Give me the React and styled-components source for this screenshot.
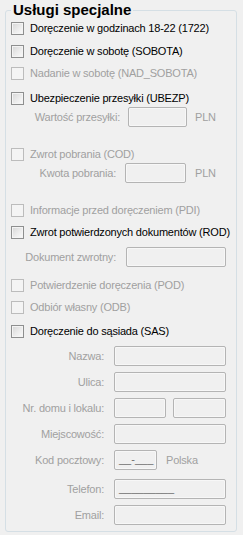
import React from 'react';
import styled, { createGlobalStyle } from 'styled-components';

const GlobalStyle = createGlobalStyle`
  html, body {
    margin: 0;
    padding: 0;
    background: #f0f0f0;
  }
  body {
    font-family: "Liberation Sans", Arial, sans-serif;
    font-size: 11px;
    letter-spacing: -0.2px;
  }
`;

const Page = styled.div`
  width: 243px;
  height: 535px;
  box-sizing: border-box;
  padding: 2px 5px 0 5px;
`;

const Group = styled.fieldset`
  margin: 0;
  padding: 0 0 6px 5px;
  width: 232px;
  box-sizing: border-box;
  border: 1px solid #d5dfe5;
  border-radius: 3px;
  min-inline-size: 0;
`;

const Title = styled.legend`
  padding: 0 2px;
  font-size: 15px;
  line-height: 16px;
  font-weight: bold;
  letter-spacing: 0;
  color: #000;
`;

const Row = styled.div`
  display: flex;
  align-items: center;
  height: 20px;
  margin-top: ${(p) => p.$top || 0}px;
  color: ${(p) => (p.$disabled ? '#a0a0a0' : '#000')};
  white-space: nowrap;
`;

const Box = styled.span`
  width: 13px;
  height: 13px;
  box-sizing: border-box;
  flex: none;
  border: 1px solid ${(p) => (p.$disabled ? '#bcbcbc' : '#8e8f8f')};
  background: ${(p) =>
    p.$disabled
      ? '#f4f4f4'
      : 'linear-gradient(135deg, #d6d6d6 0%, #ececec 55%, #fbfbfb 100%)'};
  box-shadow: inset 0 0 0 1px #f4f4f4;
`;

const CheckText = styled.span`
  margin-left: 6px;
`;

const Label = styled.span`
  width: ${(p) => p.$w}px;
  flex: none;
  text-align: right;
  color: #a0a0a0;
`;

const Input = styled.div`
  width: ${(p) => p.$w}px;
  height: 20px;
  box-sizing: border-box;
  flex: none;
  margin-left: ${(p) => p.$gap || 0}px;
  border: 1px solid #b4b4b4;
  border-radius: 2px;
  background: #f0f0f0;
  box-shadow: inset 0 0 0 1px #f7f7f7;
  color: #6d6d6d;
  font-size: 11px;
  line-height: 17px;
  padding-left: 4px;
  letter-spacing: 0;
  overflow: hidden;
`;

const Unit = styled.span`
  margin-left: ${(p) => p.$gap}px;
  color: #a0a0a0;
`;

const Check = ({ top, disabled, children }) => (
  <Row $top={top} $disabled={disabled}>
    <Box $disabled={disabled} />
    <CheckText>{children}</CheckText>
  </Row>
);

const Field = ({ top, label, lw, gap, iw, value, children }) => (
  <Row $top={top}>
    <Label $w={lw}>{label}</Label>
    <Input $w={iw} $gap={gap}>{value}</Input>
    {children}
  </Row>
);

export default function App() {
  return (
    <Page>
      <GlobalStyle />
      <Group>
        <Title>Usługi specjalne</Title>
        <Check top={0}>Doręczenie w godzinach 18-22 (1722)</Check>
        <Check top={3}>Doręczenie w sobotę (SOBOTA)</Check>
        <Check top={2} disabled>Nadanie w sobotę (NAD_SOBOTA)</Check>
        <Check top={5}>Ubezpieczenie przesyłki (UBEZP)</Check>
        <Field top={-1} label="Wartość przesyłki:" lw={109} gap={8} iw={59}>
          <Unit $gap={8}>PLN</Unit>
        </Field>

        <Check top={17} disabled>Zwrot pobrania (COD)</Check>
        <Field top={-1} label="Kwota pobrania:" lw={105} gap={9} iw={61}>
          <Unit $gap={9}>PLN</Unit>
        </Field>

        <Check top={17} disabled>Informacje przed doręczeniem (PDI)</Check>
        <Check top={2}>Zwrot potwierdzonych dokumentów (ROD)</Check>
        <Field top={5} label="Dokument zwrotny:" lw={105} gap={10} iw={100} />

        <Check top={8} disabled>Potwierdzenie doręczenia (POD)</Check>
        <Check top={2} disabled>Odbiór własny (ODB)</Check>
        <Check top={4}>Doręczenie do sąsiada (SAS)</Check>

        <Field top={5} label="Nazwa:" lw={93} gap={10} iw={112} />
        <Field top={6} label="Ulica:" lw={93} gap={10} iw={112} />
        <Field top={6} label="Nr. domu i lokalu:" lw={93} gap={10} iw={52}>
          <Input $w={53} $gap={7} />
        </Field>
        <Field top={6} label="Miejscowość:" lw={93} gap={10} iw={112} />
        <Field top={6} label="Kod pocztowy:" lw={93} gap={10} iw={43} value="__-___">
          <Unit $gap={9}>Polska</Unit>
        </Field>
        <Field top={9} label="Telefon:" lw={93} gap={10} iw={112} value="_________" />
        <Field top={6} label="Email:" lw={93} gap={10} iw={112} />
      </Group>
    </Page>
  );
}
